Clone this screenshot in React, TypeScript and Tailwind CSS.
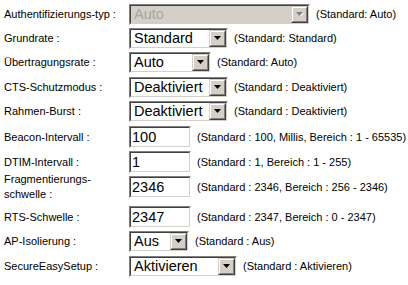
import React from 'react';

type Row = {
  label: React.ReactNode;
  kind: 'select' | 'input';
  value: string;
  width: string;
  rowH: string;
  hint: string;
  disabled?: boolean;
};

const rows: Row[] = [
  { label: 'Authentifizierungs-typ :', kind: 'select', value: 'Auto', width: 'w-[181px]', rowH: 'h-[24px]', hint: '(Standard: Auto)', disabled: true },
  { label: 'Grundrate :', kind: 'select', value: 'Standard', width: 'w-[99px]', rowH: 'h-[24px]', hint: '(Standard: Standard)' },
  { label: 'Übertragungsrate :', kind: 'select', value: 'Auto', width: 'w-[82px]', rowH: 'h-[25px]', hint: '(Standard: Auto)' },
  { label: 'CTS-Schutzmodus :', kind: 'select', value: 'Deaktiviert', width: 'w-[99px]', rowH: 'h-[24px]', hint: '(Standard : Deaktiviert)' },
  { label: 'Rahmen-Burst :', kind: 'select', value: 'Deaktiviert', width: 'w-[99px]', rowH: 'h-[25px]', hint: '(Standard : Deaktiviert)' },
  { label: 'Beacon-Intervall :', kind: 'input', value: '100', width: 'w-[62px]', rowH: 'h-[25px]', hint: '(Standard : 100, Millis, Bereich : 1 - 65535)' },
  { label: 'DTIM-Intervall :', kind: 'input', value: '1', width: 'w-[62px]', rowH: 'h-[25px]', hint: '(Standard : 1, Bereich : 1 - 255)' },
  {
    label: (
      <>
        Fragmentierungs-
        <br />
        schwelle :
      </>
    ),
    kind: 'input',
    value: '2346',
    width: 'w-[62px]',
    rowH: 'h-[30px]',
    hint: '(Standard : 2346, Bereich : 256 - 2346)',
  },
  { label: 'RTS-Schwelle :', kind: 'input', value: '2347', width: 'w-[62px]', rowH: 'h-[25px]', hint: '(Standard : 2347, Bereich : 0 - 2347)' },
  { label: 'AP-Isolierung :', kind: 'select', value: 'Aus', width: 'w-[60px]', rowH: 'h-[25px]', hint: '(Standard : Aus)' },
  { label: 'SecureEasySetup :', kind: 'select', value: 'Aktivieren', width: 'w-[108px]', rowH: 'h-[25px]', hint: '(Standard : Aktivieren)' },
];

function Sunken({ width, height, disabled, children }: { width: string; height: string; disabled?: boolean; children: React.ReactNode }) {
  return (
    <div className={`${width} ${height} shrink-0 border border-t-[#808080] border-l-[#808080] border-r-white border-b-white`}>
      <div
        className={`h-full flex border border-t-[#404040] border-l-[#404040] border-r-[#d4d0c8] border-b-[#d4d0c8] ${
          disabled ? 'bg-[#d4d0c8]' : 'bg-white'
        }`}
      >
        {children}
      </div>
    </div>
  );
}

function Arrow({ disabled }: { disabled?: boolean }) {
  return (
    <div className="w-[17px] h-full shrink-0 bg-[#d4d0c8] border border-t-[#d4d0c8] border-l-[#d4d0c8] border-r-[#404040] border-b-[#404040]">
      <div className="h-full flex items-center justify-center border border-t-white border-l-white border-r-[#808080] border-b-[#808080]">
        <svg width="8" height="5" viewBox="0 0 8 5">
          {disabled && <path d="M1 1h7L4.5 4.5z" fill="#fff" />}
          <path d="M0 0h7L3.5 4z" fill={disabled ? '#808080' : '#000'} />
        </svg>
      </div>
    </div>
  );
}

export default function App() {
  return (
    <div className="w-[408px] h-[285px] bg-white text-black pt-[4px] font-['Liberation_Sans',Arial,sans-serif]">
      {rows.map((row, i) => {
        const isSelect = row.kind === 'select';
        return (
          <div key={i} className={`${row.rowH} flex items-start`}>
            <div className={`flex items-center ${isSelect ? 'h-[21px]' : 'h-[22px]'}`}>
              <div className="w-[129px] shrink-0 pl-[4px] text-[11px] leading-[15px]">{row.label}</div>
              <Sunken width={row.width} height={isSelect ? 'h-[21px]' : 'h-[22px]'} disabled={row.disabled}>
                <div
                  className={`flex-1 min-w-0 flex items-center pt-[1px] overflow-hidden whitespace-nowrap text-[14.5px] ${
                    isSelect ? 'pl-[3px]' : 'pl-[1px]'
                  } ${row.disabled ? 'text-[#a6a6a6]' : 'text-black'}`}
                >
                  {row.value}
                </div>
                {isSelect && <Arrow disabled={row.disabled} />}
              </Sunken>
              <div className="ml-[6px] text-[11px] whitespace-nowrap">{row.hint}</div>
            </div>
          </div>
        );
      })}
    </div>
  );
}
